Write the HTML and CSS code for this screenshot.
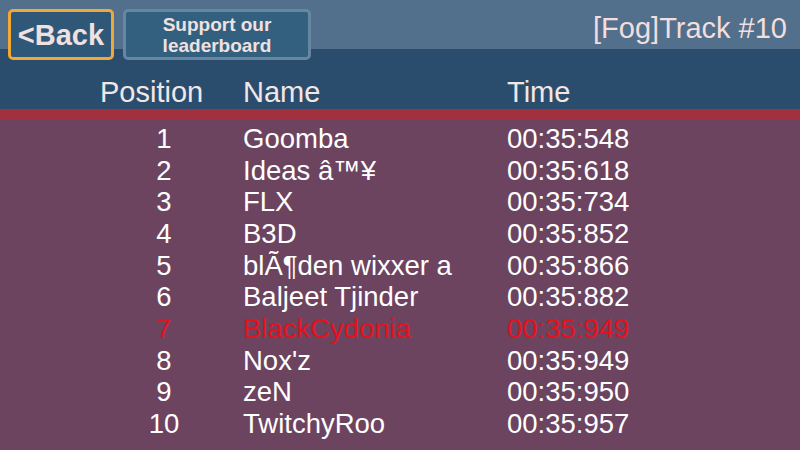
FILE: index.html
```html
<!DOCTYPE html>
<html>
<head>
<meta charset="utf-8">
<link rel="stylesheet" href="styles.css">
</head>
<body>
<div class="screen">
  <header class="top">
    <div class="toolbar">
      <button class="btn back">&lt;Back</button>
      <button class="btn support">Support our<br>leaderboard</button>
      <div class="title">[Fog]Track #10</div>
    </div>
    <div class="cols">
      <span>Position</span>
      <span>Name</span>
      <span>Time</span>
    </div>
  </header>
  <div class="stripe"></div>
  <ol class="board">
    <li class="row"><span class="pos">1</span><span>Goomba</span><span>00:35:548</span></li>
    <li class="row"><span class="pos">2</span><span>Ideas â™¥</span><span>00:35:618</span></li>
    <li class="row"><span class="pos">3</span><span>FLX</span><span>00:35:734</span></li>
    <li class="row"><span class="pos">4</span><span>B3D</span><span>00:35:852</span></li>
    <li class="row"><span class="pos">5</span><span>blÃ¶den wixxer a</span><span>00:35:866</span></li>
    <li class="row"><span class="pos">6</span><span>Baljeet Tjinder</span><span>00:35:882</span></li>
    <li class="row me"><span class="pos">7</span><span>BlackCydonia</span><span>00:35:949</span></li>
    <li class="row"><span class="pos">8</span><span>Nox'z</span><span>00:35:949</span></li>
    <li class="row"><span class="pos">9</span><span>zeN</span><span>00:35:950</span></li>
    <li class="row"><span class="pos">10</span><span>TwitchyRoo</span><span>00:35:957</span></li>
  </ol>
</div>
</body>
</html>
```
FILE: styles.css
```css
html, body {
  margin: 0;
  padding: 0;
}
body {
  width: 800px;
  height: 450px;
  overflow: hidden;
  background: #6c445f;
  font-family: "Liberation Sans", Arial, sans-serif;
}
.screen {
  width: 800px;
  height: 450px;
  display: flex;
  flex-direction: column;
}
.top {
  background: linear-gradient(to bottom, #52708b 0, #52708b 49px, #2b4d6d 49px, #2b4d6d 100%);
}
.toolbar {
  display: flex;
  align-items: flex-start;
  gap: 9px;
  padding: 9px 13px 0 8px;
  height: 51px;
}
.btn {
  box-sizing: border-box;
  height: 51px;
  margin: 0;
  padding: 0;
  border-radius: 5px;
  font-family: "Liberation Sans", Arial, sans-serif;
  font-weight: bold;
  color: #f1e0e0;
  text-align: center;
}
.back {
  width: 106px;
  border: 3px solid #f2a835;
  background: #2f5777;
  font-size: 29px;
  line-height: 44px;
}
.support {
  width: 188px;
  border: 3px solid #6686a2;
  background: #33607f;
  font-size: 19px;
  line-height: 21px;
}
.title {
  margin-left: auto;
  font-size: 29px;
  line-height: 38px;
  color: #f1dede;
}
.cols {
  display: grid;
  grid-template-columns: 143px 264px 1fr;
  padding: 15px 0 0 100px;
  height: 34px;
  font-size: 29px;
  line-height: 34px;
  color: #f2e7e7;
}
.stripe {
  height: 10px;
  background: #a2303f;
}
.board {
  list-style: none;
  margin: 0;
  padding: 4px 0 0 124px;
}
.row {
  display: grid;
  grid-template-columns: 80px 225px 1fr;
  column-gap: 39px;
  font-size: 27.5px;
  line-height: 31.67px;
  color: #ffffff;
}
.pos {
  text-align: center;
}
.row.me {
  color: #e3121d;
}
```
